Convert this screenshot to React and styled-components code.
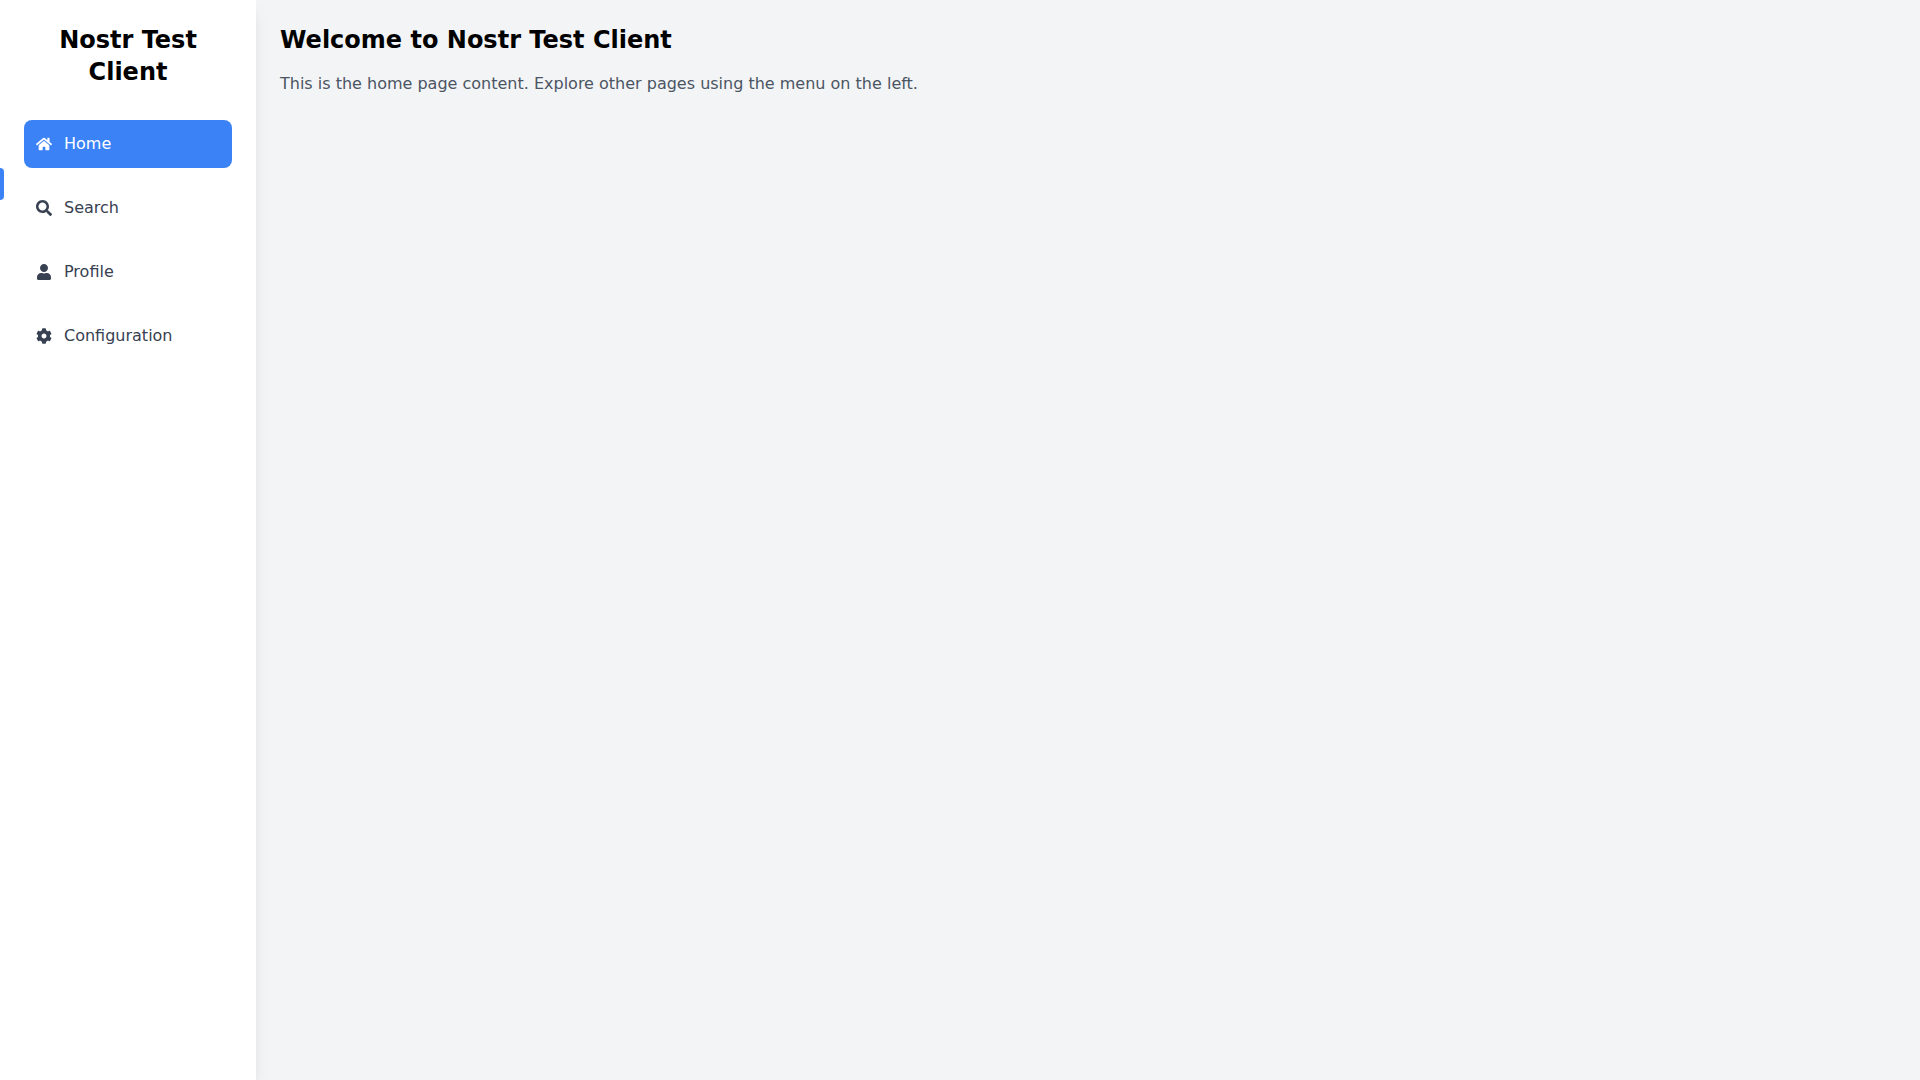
import React from "react";
import styled, { createGlobalStyle } from "styled-components";
import { FaHome, FaSearch, FaUser, FaCog } from "react-icons/fa";

const GlobalStyle = createGlobalStyle`
  *, *::before, *::after {
    box-sizing: border-box;
  }

  body {
    margin: 0;
    font-family: "DejaVu Sans", sans-serif;
    font-size: 16px;
    line-height: 24px;
    color: #000;
  }
`;

const Layout = styled.div`
  display: flex;
  min-height: 100vh;
  background: #f3f4f6;
`;

const Sidebar = styled.aside`
  position: relative;
  flex: 0 0 256px;
  padding: 24px;
  background: #fff;
  box-shadow:
    0 10px 15px -3px rgba(0, 0, 0, 0.1),
    0 4px 6px -4px rgba(0, 0, 0, 0.1);
`;

const Brand = styled.h1`
  margin: 0 0 32px;
  font-size: 24px;
  line-height: 32px;
  font-weight: 700;
  text-align: center;
`;

const Menu = styled.ul`
  display: flex;
  flex-direction: column;
  gap: 16px;
  margin: 0;
  padding: 0;
  list-style: none;
`;

const MenuLink = styled.a`
  display: flex;
  align-items: center;
  gap: 12px;
  padding: 12px;
  border-radius: 8px;
  color: ${({ $active }) => ($active ? "#fff" : "#374151")};
  background: ${({ $active }) => ($active ? "#3b82f6" : "transparent")};
  text-decoration: none;
`;

const Indicator = styled.span`
  position: absolute;
  left: 0;
  top: 168px;
  width: 4px;
  height: 32px;
  border-radius: 0 4px 4px 0;
  background: #3b82f6;
`;

const Content = styled.main`
  flex: 1;
  padding: 24px;
`;

const Title = styled.h2`
  margin: 0 0 16px;
  font-size: 24px;
  line-height: 32px;
  font-weight: 700;
`;

const Intro = styled.p`
  margin: 0;
  color: #4b5563;
`;

const items = [
  { label: "Home", href: "#home", Icon: FaHome },
  { label: "Search", href: "#search", Icon: FaSearch },
  { label: "Profile", href: "#profile", Icon: FaUser },
  { label: "Configuration", href: "#configuration", Icon: FaCog },
];

export default function App() {
  const current = "Home";

  return (
    <>
      <GlobalStyle />
      <Layout>
        <Sidebar>
          <Brand>Nostr Test Client</Brand>
          <nav>
            <Menu>
              {items.map(({ label, href, Icon }) => (
                <li key={label}>
                  <MenuLink
                    href={href}
                    $active={label === current}
                    aria-current={label === current ? "page" : undefined}
                  >
                    <Icon size={16} aria-hidden="true" />
                    <span>{label}</span>
                  </MenuLink>
                </li>
              ))}
            </Menu>
          </nav>
          <Indicator />
        </Sidebar>
        <Content>
          <Title>Welcome to Nostr Test Client</Title>
          <Intro>
            This is the home page content. Explore other pages using the menu on the left.
          </Intro>
        </Content>
      </Layout>
    </>
  );
}
